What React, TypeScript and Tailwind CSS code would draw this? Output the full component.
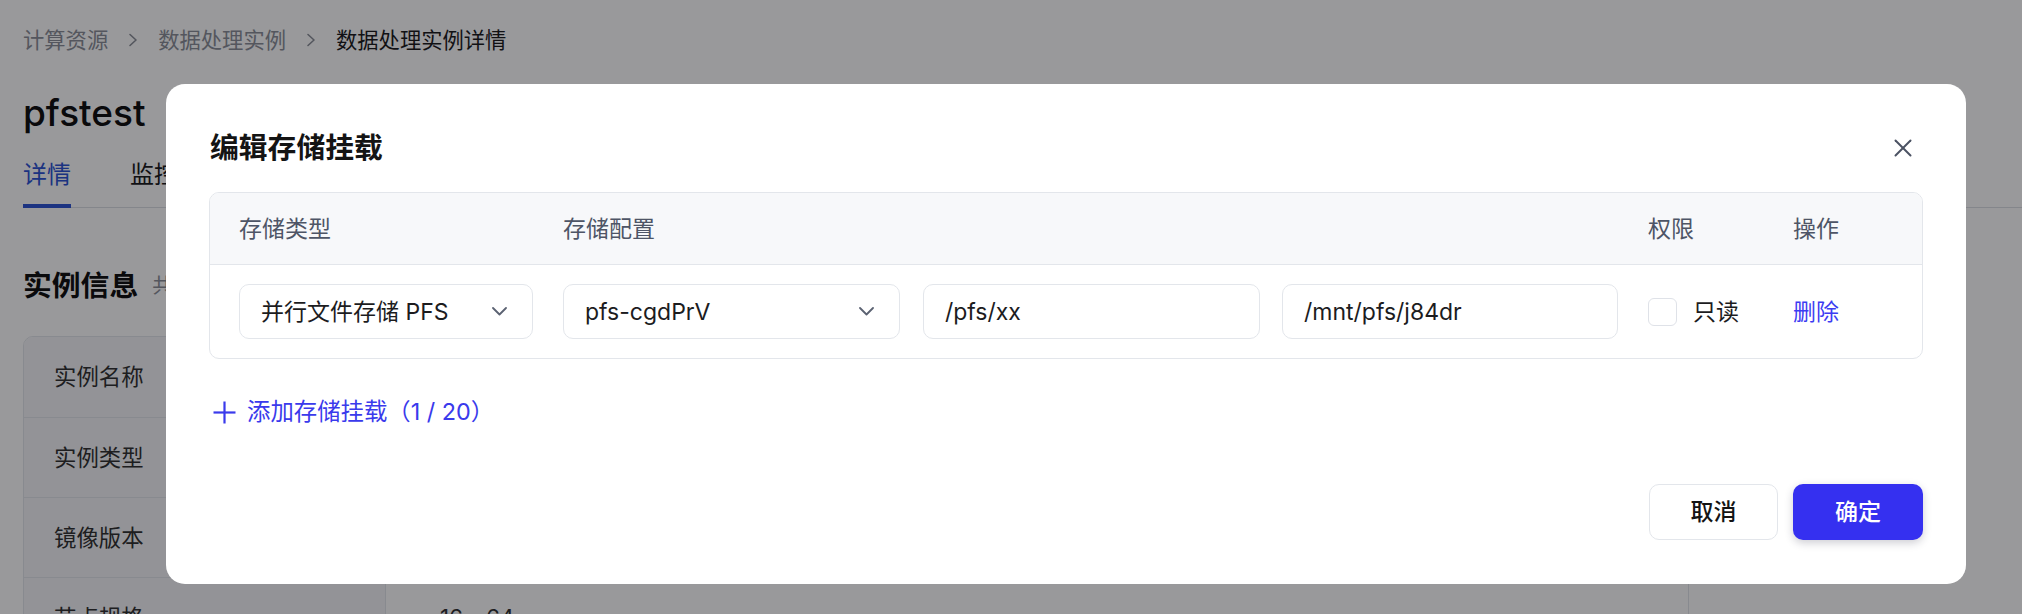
import React from "react";

const FONT = "font-['Inter','Noto_Sans_CJK_SC',sans-serif]";

function Chevron() {
  return (
    <svg width="15" height="9" viewBox="0 0 15 9" fill="none" className="shrink-0">
      <polyline points="1,1 7.5,7.5 14,1" stroke="#5b6272" strokeWidth="1.8" strokeLinecap="round" strokeLinejoin="round" />
    </svg>
  );
}

function SelectBox({ value, w }: { value: string; w: string }) {
  return (
    <div className={`${w} h-[55px] shrink-0 rounded-[10px] border border-[#e3e6eb] bg-white flex items-center justify-between pl-[21px] pr-[25px]`}>
      <span className="text-[23px] leading-[30px] text-[#1c1c1e]">{value}</span>
      <Chevron />
    </div>
  );
}

function InputBox({ value, w }: { value: string; w: string }) {
  return (
    <div className={`${w} h-[55px] shrink-0 rounded-[10px] border border-[#e3e6eb] bg-white flex items-center pl-[21px]`}>
      <span className="text-[23px] leading-[30px] text-[#1c1c1e]">{value}</span>
    </div>
  );
}

function Crumb() {
  return (
    <span className="mx-[20px] flex items-center">
      <svg width="10" height="14" viewBox="0 0 10 14" fill="none">
        <polyline points="2,1.5 8,7 2,12.5" stroke="#8c9099" strokeWidth="1.6" strokeLinecap="round" strokeLinejoin="round" />
      </svg>
    </span>
  );
}

function Page() {
  const rows = ["实例名称", "实例类型", "镜像版本", "节点规格"];
  return (
    <div className="pl-[23px]">
      <div className="pt-[26px] flex items-center text-[21.3px] leading-[28px]">
        <span className="text-[#8c9099]">计算资源</span>
        <Crumb />
        <span className="text-[#8c9099]">数据处理实例</span>
        <Crumb />
        <span className="text-[#1d1d1f]">数据处理实例详情</span>
      </div>
      <div className="mt-[36px] text-[37px] leading-[46px] font-medium text-[#111]">pfstest</div>
      <div className="mt-[23px] flex gap-[59px] border-b border-[#dcdfe5]">
        <div className="-mb-px border-b-4 border-[#2f55d4] pb-[13px] text-[24px] leading-[32px] text-[#2f55d4]">详情</div>
        <div className="pb-[13px] text-[24px] leading-[32px] text-[#1d1d1f]">监控</div>
      </div>
      <div className="mt-[58px] flex items-center gap-[14px]">
        <span className="text-[28.8px] leading-[40px] font-semibold text-[#111]">实例信息</span>
        <span className="text-[20.8px] text-[#8c9099]">共 8 项</span>
      </div>
      <div className="mt-[30px] w-[1666px] rounded-t-[10px] border border-[#e3e6eb] overflow-hidden">
        {rows.map((r, i) => (
          <div key={r} className={`flex h-[80px] ${i > 0 ? "border-t border-[#e3e6eb]" : ""}`}>
            <div className="w-[362px] bg-[#f5f6f8] border-r border-[#e3e6eb] flex items-center pl-[30px] text-[22.4px] text-[#333]">{r}</div>
            <div className="flex-1 flex items-center pl-[54px] text-[22.4px] text-[#333]">{i === 3 ? "16 - 64" : ""}</div>
          </div>
        ))}
      </div>
    </div>
  );
}

export default function App() {
  return (
    <div className={`relative w-[2022px] h-[614px] overflow-hidden bg-white ${FONT}`}>
      <Page />
      <div className="absolute inset-0 bg-[rgba(0,0,4,0.4)]" />
      <div className="absolute left-[166px] top-[84px] w-[1800px] h-[500px] rounded-[19px] bg-white flex flex-col px-[43px] pb-[44px]">
        <div className="pt-[44px] pl-px flex items-center justify-between">
          <span className="text-[28.8px] leading-[40px] font-semibold text-[#141414]">编辑存储挂载</span>
          <div className="w-[38px] h-[38px] mr-[1px] flex items-center justify-center">
            <svg width="18" height="18" viewBox="0 0 18 18" fill="none">
              <line x1="1.5" y1="1.5" x2="16.5" y2="16.5" stroke="#4b5263" strokeWidth="2" strokeLinecap="round" />
              <line x1="16.5" y1="1.5" x2="1.5" y2="16.5" stroke="#4b5263" strokeWidth="2" strokeLinecap="round" />
            </svg>
          </div>
        </div>

        <div className="mt-[24px] rounded-[10px] border border-[#e3e6eb] overflow-hidden">
          <div className="h-[72px] bg-[#f7f8fa] border-b border-[#e3e6eb] flex items-center pl-[29px] pr-[30px] gap-[30px] text-[23px] leading-[30px] text-[#4e5566]">
            <div className="w-[294px] shrink-0">存储类型</div>
            <div className="w-[1055px] shrink-0">存储配置</div>
            <div className="w-[115px] shrink-0">权限</div>
            <div className="flex-1">操作</div>
          </div>
          <div className="h-[93px] flex items-center pl-[29px] pr-[30px] gap-[30px]">
            <SelectBox value="并行文件存储 PFS" w="w-[294px]" />
            <div className="w-[1055px] shrink-0 flex items-center">
              <SelectBox value="pfs-cgdPrV" w="w-[337px]" />
              <div className="w-[23px] shrink-0" />
              <InputBox value="/pfs/xx" w="w-[337px]" />
              <div className="w-[22px] shrink-0" />
              <InputBox value="/mnt/pfs/j84dr" w="w-[336px]" />
            </div>
            <div className="w-[115px] shrink-0 flex items-center gap-[16px]">
              <div className="w-[29px] h-[28px] rounded-[6px] border border-[#dfe2e8] bg-white" />
              <span className="text-[23px] leading-[30px] text-[#1c1c1e]">只读</span>
            </div>
            <div className="flex-1 text-[23px] leading-[30px] text-[#3c3cf2]">删除</div>
          </div>
        </div>

        <div className="mt-[37px] pl-[4px] flex items-center h-[32px] text-[#3a3aec]">
          <div className="w-[34px] h-[24px] flex items-center">
            <svg width="23" height="23" viewBox="0 0 23 23" fill="none">
              <line x1="11.5" y1="0.5" x2="11.5" y2="22.5" stroke="#3a3aec" strokeWidth="2.2" />
              <line x1="0.5" y1="11.5" x2="22.5" y2="11.5" stroke="#3a3aec" strokeWidth="2.2" />
            </svg>
          </div>
          <span className="text-[23.4px] leading-[32px]">添加存储挂载（1 / 20）</span>
        </div>

        <div className="mt-auto flex justify-end gap-[15px]">
          <button className="w-[129px] h-[56px] rounded-[10px] border border-[#e3e6eb] bg-white text-[23px] font-medium text-[#141414]">取消</button>
          <button className="w-[130px] h-[56px] rounded-[10px] bg-[#3530f0] text-[23px] font-medium text-white shadow-[0_3px_8px_rgba(30,30,60,0.22)]">确定</button>
        </div>
      </div>
    </div>
  );
}
